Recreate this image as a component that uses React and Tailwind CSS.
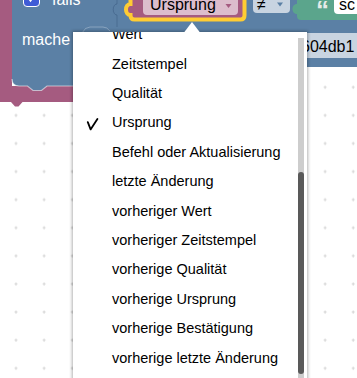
const ITEMS = [
  "Wert",
  "Zeitstempel",
  "Qualität",
  "Ursprung",
  "Befehl oder Aktualisierung",
  "letzte Änderung",
  "vorheriger Wert",
  "vorheriger Zeitstempel",
  "vorherige Qualität",
  "vorherige Ursprung",
  "vorherige Bestätigung",
  "vorherige letzte Änderung",
];

function Check() {
  return (
    <svg
      width="13"
      height="13"
      viewBox="0 0 13 13"
      className="absolute left-[13px] top-[9px]"
    >
      <path
        d="M1.8 4.2 L4.6 11.4 L11.4 1"
        fill="none"
        stroke="#000"
        strokeWidth="1.8"
        strokeLinejoin="round"
        strokeLinecap="round"
      />
    </svg>
  );
}

function Canvas() {
  return (
    <svg className="absolute inset-0" width="357" height="378">
      <defs>
        <pattern id="grid" width="28.1" height="28.1" patternUnits="userSpaceOnUse">
          <path d="M14.5 3H17.5M16 1.5V4.5" stroke="#d4d4d4" strokeWidth="1" />
        </pattern>
      </defs>
      <rect width="357" height="378" fill="url(#grid)" />
      {/* outer pink block */}
      <path d="M0,-5 H12 V86 H110 V102 H22.5 L18.5,106.5 H15 L11,102 H0 Z" fill="#a55b80" />
      {/* blue falls block */}
      <path
        d="M12,-5 H357 V67 H288 V33 H100 V86 H47 L41.5,90.5 H33 L27.5,86 H19 Q12,86 12,79 Z"
        fill="#5b80a5"
      />
      <path
        d="M12,79 Q12,86 19,86 H27.5 L33,90.5 H41.5 L47,86 H74"
        fill="none"
        stroke="rgba(255,255,255,0.55)"
        strokeWidth="1.2"
      />
      <path
        d="M74,33 H82 Q85,27 90,27 H103 Q107,27 110,31"
        fill="none"
        stroke="rgba(255,255,255,0.28)"
        strokeWidth="1"
      />
      <path
        d="M117,-5 V4 C112,4 112,15 117,15 V27"
        fill="none"
        stroke="rgba(40,70,110,0.35)"
        strokeWidth="1"
      />
      {/* Ursprung block, selected */}
      <path
        d="M130.5,-6 H244.5 V15.5 Q244.5,19.5 240.5,19.5 H134.5 Q130.5,19.5 130.5,15.5 V15 C124.5,15 124.5,4 130.5,4 Z"
        fill="#a55b80"
        stroke="#ffcc33"
        strokeWidth="4"
      />
      <rect x="143" y="-6" width="95" height="21" rx="4" fill="#dcbdcc" />
      <polygon points="225.5,4 231.5,4 228.5,8" fill="#a55b80" />
      {/* ≠ dropdown */}
      <rect x="253" y="-6" width="37" height="19" rx="4" fill="#c8d4e1" />
      <polygon points="277,2.5 283,2.5 280,6.5" fill="#5b80a5" />
      {/* green text block */}
      <path
        d="M297,-5 H357 V20 H301 Q297,20 297,16 V14 C291,14 291,4 297,4 Z"
        fill="#5ba58c"
      />
      <rect x="334" y="-6" width="30" height="20" rx="4" fill="#ffffff" />
      {/* 604db1 field */}
      <rect x="286" y="33" width="80" height="25" rx="4" fill="#c8d4e1" />
    </svg>
  );
}

export default function App() {
  return (
    <div className="relative w-[357px] h-[378px] overflow-hidden bg-white font-['Liberation_Sans',Arial,sans-serif]">
      <Canvas />

      {/* checkbox icon */}
      <div className="absolute left-[23px] top-[-11px] w-[17px] h-[17.5px] rounded-[4px] border-[1.5px] border-white bg-[#3f5bd6]">
        <svg width="14" height="14" viewBox="0 0 14 14" className="absolute left-0 top-0">
          <path d="M3 6 L6.5 10.5 L12 3" fill="none" stroke="#fff" strokeWidth="2" />
        </svg>
      </div>

      <span className="absolute left-[52px] top-[-9.3px] text-[16px] leading-[18px] text-white">falls</span>
      <span className="absolute left-[22px] top-[30.7px] text-[16px] leading-[18px] text-white">mache</span>
      <span className="absolute left-[150px] top-[-4.3px] text-[16px] leading-[18px] text-black">Ursprung</span>
      <span className="absolute left-[257px] top-[-4.5px] text-[16px] leading-[18px] text-black">≠</span>
      <span className="absolute left-[316px] top-[-3px] text-[26px] leading-[26px] font-bold text-[#e6ebe8]">“</span>
      <span className="absolute left-[339px] top-[-4.3px] text-[16px] leading-[18px] text-black">sc</span>
      <span className="absolute left-[301px] top-[38.2px] text-[16px] leading-[18px] text-black">604db1</span>

      {/* dropdown menu */}
      <div className="absolute left-[73px] top-[32px] w-[234px] h-[352px] bg-white shadow-[0_0_3px_1px_rgba(0,0,0,0.3)] overflow-hidden">
        <div className="mt-[-11.6px] flex flex-col">
          {ITEMS.map((t) => (
            <div
              key={t}
              className="relative h-[29.4px] shrink-0 flex items-center pl-[39px] text-[14.5px] text-black whitespace-nowrap"
            >
              {t === "Ursprung" && <Check />}
              {t}
            </div>
          ))}
        </div>
        <div className="absolute left-[225px] top-[6px] bottom-0 w-[5.5px] bg-[#cdcdcd]">
          <div className="absolute left-0 right-0 top-[134px] h-[202px] rounded-full bg-[#595959]" />
        </div>
      </div>
      <svg className="absolute left-[182px] top-[21px]" width="20" height="12">
        <polygon points="2,11.5 10,1 18,11.5" fill="#ffffff" />
      </svg>
    </div>
  );
}
